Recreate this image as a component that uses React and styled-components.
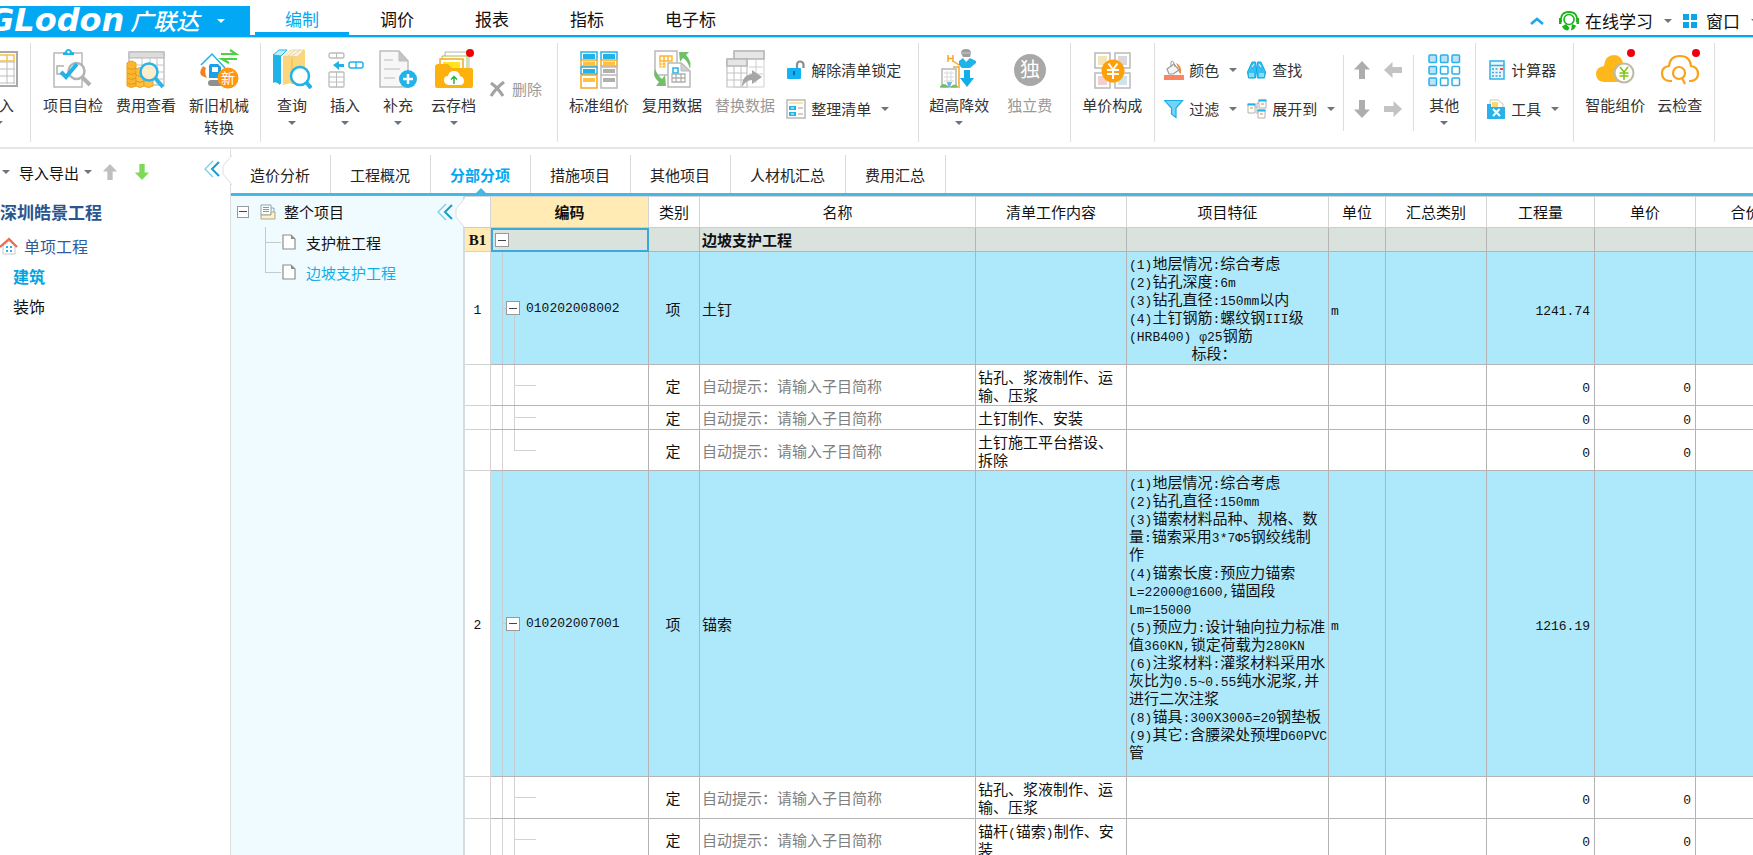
import { Fragment, useState } from "react";
import styled, { createGlobalStyle, css } from "styled-components";

const BLUE = "#02a8f3";

export default function App() {
    const [menu, setMenu] = useState("编制");
    const [tab, setTab] = useState("分部分项");

    return (
        <Page>
            <GlobalStyle />
            <TopBar>
                <Brand type="button">
                    <BrandLatin>GLodon</BrandLatin>
                    <BrandName>广联达</BrandName>
                    <Caret $light />
                </Brand>
                <Menu>
                    {MENUS.map((name) => (
                        <MenuItem key={name} type="button" $active={name === menu} onClick={() => setMenu(name)}>{name}</MenuItem>
                    ))}
                </Menu>
                <TopTools>
                    <ToolButton type="button" aria-label="收起">
                        <svg width="14" height="8" viewBox="0 0 14 8"><path d="M1 7L7 2L13 7" fill="none" stroke="#1aa9ec" strokeWidth="2.6" /></svg>
                    </ToolButton>
                    <ToolButton type="button"><HeadsetIcon />在线学习<Caret /></ToolButton>
                    <ToolButton type="button"><WindowIcon />窗口<Caret /></ToolButton>
                </TopTools>
            </TopBar>
            <Ribbon />
            <Body>
                <Sidebar />
                <Main>
                    <Tabs>
                        {TABS.map((name) => (
                            <Tab key={name} type="button" $active={name === tab} onClick={() => setTab(name)}>{name}</Tab>
                        ))}
                    </Tabs>
                    <Work>
                        <ProjectTree />
                        <BillTable />
                    </Work>
                </Main>
            </Body>
        </Page>
    );
}

const MENUS = ["编制", "调价", "报表", "指标", "电子标"];
const TABS = ["造价分析", "工程概况", "分部分项", "措施项目", "其他项目", "人材机汇总", "费用汇总"];

function Big({ icon, label, second, caret, disabled }) {
    return (
        <BigButton type="button" disabled={disabled}>
            <IconBox>{icon}</IconBox>
            <span>{label}</span>
            {second && <span>{second}</span>}
            {caret && <Caret />}
        </BigButton>
    );
}

function Small({ icon, label, caret, disabled }) {
    return (
        <SmallButton type="button" disabled={disabled}>
            {icon}
            <span>{label}</span>
            {caret && <Caret />}
        </SmallButton>
    );
}

function Ribbon() {
    return (
        <RibbonBar>
            <FirstGroup>
                <Big icon={<ImportIcon />} label="导入" caret />
            </FirstGroup>
            <Group $gap={1} $left={6} $right={5}>
                <Big icon={<CheckIcon />} label="项目自检" />
                <Big icon={<CostIcon />} label="费用查看" />
                <Big icon={<MachineIcon />} label="新旧机械" second="转换" />
            </Group>
            <Group $gap={1} $left={5} $right={11}>
                <Big icon={<QueryIcon />} label="查询" caret />
                <Big icon={<InsertIcon />} label="插入" caret />
                <Big icon={<AppendIcon />} label="补充" caret />
                <Big icon={<ArchiveIcon />} label="云存档" caret />
                <Middle>
                    <Small icon={<DeleteIcon />} label="删除" disabled />
                </Middle>
            </Group>
            <Group $gap={1} $left={5} $right={13}>
                <Big icon={<StandardIcon />} label="标准组价" />
                <Big icon={<ReuseIcon />} label="复用数据" />
                <Big icon={<ReplaceIcon />} label="替换数据" disabled />
                <Stack>
                    <Small icon={<UnlockIcon />} label="解除清单锁定" />
                    <Small icon={<ListIcon />} label="整理清单" caret />
                </Stack>
            </Group>
            <Group $gap={6} $left={4} $right={12}>
                <Big icon={<HeightIcon />} label="超高降效" caret />
                <Big icon={<SoloIcon />} label="独立费" disabled />
            </Group>
            <Group $left={5} $right={6}>
                <Big icon={<PriceIcon />} label="单价构成" />
            </Group>
            <Group $short $gap={2} $left={5} $right={4}>
                <Stack>
                    <Small icon={<PaintIcon />} label="颜色" caret />
                    <Small icon={<FilterIcon />} label="过滤" caret />
                </Stack>
                <Stack>
                    <Small icon={<BinocularsIcon />} label="查找" />
                    <Small icon={<ExpandIcon />} label="展开到" caret />
                </Stack>
            </Group>
            <Group $short $left={2} $right={5}>
                <Stack>
                    <ArrowButton type="button" aria-label="上移"><ArrowIcon turn={0} color="#adadad" /></ArrowButton>
                    <ArrowButton type="button" aria-label="下移"><ArrowIcon turn={180} color="#adadad" /></ArrowButton>
                </Stack>
                <Stack>
                    <ArrowButton type="button" aria-label="左移"><ArrowIcon turn={270} color="#c3c3c3" /></ArrowButton>
                    <ArrowButton type="button" aria-label="右移"><ArrowIcon turn={90} color="#c3c3c3" /></ArrowButton>
                </Stack>
            </Group>
            <Group $left={4} $right={5}>
                <Big icon={<OtherIcon />} label="其他" caret />
            </Group>
            <Group $left={6} $right={10}>
                <Stack>
                    <Small icon={<CalcIcon />} label="计算器" />
                    <Small icon={<ToolIcon />} label="工具" caret />
                </Stack>
            </Group>
            <Group $left={5} $right={6}>
                <Big icon={<SmartIcon />} label="智能组价" />
                <Big icon={<CloudCheckIcon />} label="云检查" />
            </Group>
        </RibbonBar>
    );
}

function Sidebar() {
    return (
        <Side>
            <SideTools>
                <Caret />
                <SideButton type="button">导入导出<Caret /></SideButton>
                <SideArrow type="button" aria-label="上移"><ArrowIcon turn={0} color="#bfbfbf" size={16} /></SideArrow>
                <SideArrow type="button" aria-label="下移"><ArrowIcon turn={180} color="#7ed957" size={16} /></SideArrow>
                <Fold><FoldIcon /></Fold>
            </SideTools>
            <SideTitle>深圳皓景工程</SideTitle>
            <SideLink href="#unit" $color="#2f5c9b"><HouseIcon />单项工程</SideLink>
            <SideLink href="#build" $indent $color="#00a6e0" $bold>建筑</SideLink>
            <SideLink href="#decor" $indent $color="#111">装饰</SideLink>
        </Side>
    );
}

function ProjectTree() {
    return (
        <Tree>
            <TreeHead>
                <Toggle type="button" aria-label="折叠" $small />
                <ProjectIcon />
                <span>整个项目</span>
                <Fold><FoldIcon /></Fold>
            </TreeHead>
            <TreeList>
                <TreeItem><PageIcon /><a href="#pile">支护桩工程</a></TreeItem>
                <TreeItem $active><PageIcon /><a href="#slope">边坡支护工程</a></TreeItem>
            </TreeList>
        </Tree>
    );
}

const COLUMNS = [
    { title: "", width: 26 },
    { title: "编码", width: 158 },
    { title: "类别", width: 51 },
    { title: "名称", width: 276 },
    { title: "清单工作内容", width: 151 },
    { title: "项目特征", width: 202 },
    { title: "单位", width: 57 },
    { title: "汇总类别", width: 101 },
    { title: "工程量", width: 108 },
    { title: "单价", width: 101 },
    { title: "合价", width: 100 },
];

const HINT = "自动提示：请输入子目简称";

const ROWS = [
    {
        kind: "item", no: "1", code: "010202008002", type: "项", name: "土钉", unit: "m", amount: "1241.74", height: 113,
        features: [
            "(1)地层情况:综合考虑",
            "(2)钻孔深度:6m",
            "(3)钻孔直径:150mm以内",
            "(4)土钉钢筋:螺纹钢III级",
            "(HRB400) φ25钢筋",
            "        标段：",
        ],
    },
    { kind: "sub", work: ["钻孔、浆液制作、运", "输、压浆"], height: 41 },
    { kind: "sub", work: ["土钉制作、安装"], height: 24 },
    { kind: "sub", work: ["土钉施工平台搭设、", "拆除"], height: 41, last: true },
    {
        kind: "item", no: "2", code: "010202007001", type: "项", name: "锚索", unit: "m", amount: "1216.19", height: 306,
        features: [
            "(1)地层情况:综合考虑",
            "(2)钻孔直径:150mm",
            "(3)锚索材料品种、规格、数",
            "量:锚索采用3*7Φ5钢绞线制",
            "作",
            "(4)锚索长度:预应力锚索",
            "L=22000@1600,锚固段",
            "Lm=15000",
            "(5)预应力:设计轴向拉力标准",
            "值360KN,锁定荷载为280KN",
            "(6)注浆材料:灌浆材料采用水",
            "灰比为0.5~0.55纯水泥浆,并",
            "进行二次注浆",
            "(8)锚具:300X300δ=20钢垫板",
            "(9)其它:含腰梁处预埋D60PVC",
            "管",
        ],
    },
    { kind: "sub", work: ["钻孔、浆液制作、运", "输、压浆"], height: 42 },
    { kind: "sub", work: ["锚杆(锚索)制作、安", "装"], height: 42 },
];

// half-width runs are set in the mono face, the rest stays in the CJK face
function Mixed({ text }) {
    return text.split(/([\x20-\x7eφΦδ]+)/).map((part, i) => (
        i % 2 ? <Mono key={i}>{part}</Mono> : <Fragment key={i}>{part}</Fragment>
    ));
}

function Lines({ lines }) {
    return (
        <Para>
            {lines.map((line) => <span key={line}><Mixed text={line} /></span>)}
        </Para>
    );
}

function BillTable() {
    return (
        <TableWrap>
            <Table>
                <colgroup>
                    {COLUMNS.map((c) => <Col key={c.title} $width={c.width} />)}
                </colgroup>
                <thead>
                    <tr>
                        {COLUMNS.map((c) => <Th key={c.title} $current={c.title === "编码"}>{c.title}</Th>)}
                    </tr>
                </thead>
                <tbody>
                    <Row $tone="#d9e2dd" $height={24}>
                        <NoCell $current>B1</NoCell>
                        <RootCell><Toggle type="button" aria-label="折叠" /></RootCell>
                        <Td />
                        <Td $bold>边坡支护工程</Td>
                        <Td /><Td /><Td /><Td /><Td /><Td /><Td />
                    </Row>
                    {ROWS.map((row, i) => row.kind === "item" ? (
                        <Row key={i} $tone="#aee9fb" $height={row.height}>
                            <NoCell><Mono>{row.no}</Mono></NoCell>
                            <ItemCell>
                                <CodeBox><Toggle type="button" aria-label="折叠" /><Mono>{row.code}</Mono></CodeBox>
                            </ItemCell>
                            <Td $align="center">{row.type}</Td>
                            <Td>{row.name}</Td>
                            <Td />
                            <FeatureCell><Lines lines={row.features} /></FeatureCell>
                            <Td><Mono>{row.unit}</Mono></Td>
                            <Td />
                            <Td $align="right"><Mono>{row.amount}</Mono></Td>
                            <Td /><Td />
                        </Row>
                    ) : (
                        <Row key={i} $tone="#fff" $height={row.height}>
                            <NoCell />
                            <SubCell $last={row.last} />
                            <Td $align="center">定</Td>
                            <Td $muted>{HINT}</Td>
                            <Td><Lines lines={row.work} /></Td>
                            <Td /><Td /><Td />
                            <Td $align="right"><Mono>0</Mono></Td>
                            <Td $align="right"><Mono>0</Mono></Td>
                            <Td />
                        </Row>
                    ))}
                </tbody>
            </Table>
        </TableWrap>
    );
}

/* ---------- icons ---------- */

function Icon40({ children }) {
    return <svg width="40" height="40" viewBox="0 0 40 40" fill="none">{children}</svg>;
}

function Icon20({ children }) {
    return <svg width="20" height="20" viewBox="0 0 20 20" fill="none">{children}</svg>;
}

function ImportIcon() {
    return (
        <Icon40>
            <rect x="2" y="3" width="36" height="34" fill="#fff" stroke="#a9a9a9" strokeWidth="2" />
            <path d="M5 13H36M5 20H36M5 27H36M5 34H36M12 13V35M20 13V35M28 13V35M35 13V35" stroke="#bdbdbd" />
            <path d="M5 6H35V12H5ZM12 6V12M20 6V12M28 6V12" stroke="#f9c04d" strokeWidth="1.5" />
        </Icon40>
    );
}

function CheckIcon() {
    return (
        <Icon40>
            <path d="M1 4H29V38H1Z" stroke="#b9b9b9" strokeWidth="1.5" fill="#fff" />
            <path d="M10 6V4Q10 3 12 3Q13 0 15.500 0Q18 0 19 3Q21 3 21 4V6Z" fill="#1fb3ea" />
            <circle cx="15.500" cy="3" r="1.300" fill="#fff" />
            <path d="M11 17H4V25H11" stroke="#b0b0b0" strokeWidth="1.500" />
            <circle cx="23.500" cy="22" r="8" fill="#fff" stroke="#b3b3b3" strokeWidth="2.500" />
            <path d="M29 28L37 36" stroke="#b3b3b3" strokeWidth="4" />
            <path d="M8 23L13 28L24 15" stroke="#1fb3ea" strokeWidth="4" />
        </Icon40>
    );
}

function CostIcon() {
    return (
        <Icon40>
            <path d="M3 3H38V36H3Z" fill="#fff" stroke="#c4c4c4" strokeWidth="1.5" />
            <path d="M3 3H38V9H3Z" fill="#dcdcdc" stroke="#b4b4b4" />
            <path d="M4 16H38M4 23H38M4 30H38M16 9V36M24 9V36M31 9V36" stroke="#c4c4c4" />
            <path d="M1 14Q5 10 10 14V37Q5 40 1 37Z" fill="#f9b62e" stroke="#eea21a" />
            <path d="M10 20Q14 17 18 20V37Q14 40 10 37Z" fill="#fbc146" stroke="#eea21a" />
            <path d="M18 30Q22 28 27 31V37Q22 40 18 37Z" fill="#fbc146" stroke="#eea21a" />
            <path d="M1 19Q5 22 10 19M1 24Q5 27 10 24M1 29Q5 32 10 29M1 34Q5 37 10 34M10 26Q14 29 18 26M10 32Q14 35 18 32" stroke="#e8961a" />
            <circle cx="23" cy="23" r="8.500" fill="#fdeecb" stroke="#2bb4e9" strokeWidth="2.500" />
            <path d="M29 29L37 38" stroke="#2bb4e9" strokeWidth="4" />
        </Icon40>
    );
}

function MachineIcon() {
    return (
        <Icon40>
            <path d="M2 16L13 5L26 19" stroke="#1fb3ea" strokeWidth="1.500" />
            <path d="M4 17Q-1 24 3 27L8 29Q5 23 7 19Z" fill="#f58220" />
            <path d="M11 15H19L22 18V29H10V17Z" fill="#1c9fe4" />
            <rect x="13" y="18" width="6" height="5" fill="#fff" />
            <rect x="9" y="31" width="17" height="6" rx="3" fill="#8f8f8f" />
            <path d="M22 5H37L31 1M38 10H23L30 14" stroke="#4fd043" strokeWidth="2.200" />
            <circle cx="29" cy="29" r="10.500" fill="#ff980f" />
            <text x="29" y="34" textAnchor="middle" fontSize="14" fill="#fff" fontFamily="'Noto Sans CJK SC', sans-serif">新</text>
        </Icon40>
    );
}

function QueryIcon() {
    return (
        <Icon40>
            <path d="M1 6L8 3V36Q4 32 1 34Z" fill="#1fb3ea" />
            <path d="M1 6L7 1H15L9 7Z" fill="#c6ecf9" stroke="#1fb3ea" />
            <path d="M8 7V35" stroke="#1fb3ea" strokeWidth="2" />
            <path d="M11 8L19 1H33V32L26 37L19 34L11 36Z" fill="#fbd67a" />
            <path d="M11 8L19 1H32L25 8L18 7Z" fill="#fdf3da" stroke="#e9c46b" strokeWidth=".6" />
            <path d="M16 7L23 1M20 7L28 1" stroke="#d9d2c0" />
            <path d="M20 9V35" stroke="#e9bb55" />
            <circle cx="28" cy="27" r="9" fill="#fff" stroke="#1fb3ea" strokeWidth="2.500" />
            <path d="M34 33L39 39" stroke="#1fb3ea" strokeWidth="4" />
        </Icon40>
    );
}

function InsertIcon() {
    return (
        <Icon40>
            <rect x="4" y="4" width="15" height="5" rx="2" stroke="#bcbcbc" strokeWidth="1.300" />
            <path d="M11.500 4V9" stroke="#bcbcbc" />
            <rect x="4" y="23" width="15" height="15" rx="1" stroke="#bcbcbc" strokeWidth="1.300" />
            <path d="M4 28H19M4 33H19M11.500 23V38" stroke="#bcbcbc" />
            <path d="M8 16L14 12V15H19V18H14V21Z" fill="#1fb3ea" />
            <rect x="24" y="13" width="14" height="6" rx="2" stroke="#1fb3ea" strokeWidth="1.500" />
            <path d="M31 13V19" stroke="#1fb3ea" strokeWidth="1.300" />
        </Icon40>
    );
}

function AppendIcon() {
    return (
        <Icon40>
            <path d="M2 2H21L30 12V38H2Z" fill="#f7f7f7" stroke="#bdbdbd" strokeWidth="1.500" />
            <path d="M21 2V12H30Z" fill="#c4c4c4" stroke="#bdbdbd" />
            <path d="M6 11H15M6 20H22M6 29H17" stroke="#cfcfcf" strokeWidth="1.500" />
            <circle cx="30" cy="30" r="9" fill="#1fb3ea" />
            <path d="M30 25V35M25 30H35" stroke="#fff" strokeWidth="2.500" />
        </Icon40>
    );
}

function ArchiveIcon() {
    return (
        <Icon40>
            <path d="M11 3H35V20H11Z" fill="#fff" stroke="#b5b5b5" />
            <path d="M8 7H33V22H8Z" fill="#fff" stroke="#a5c23c" />
            <path d="M6 10H29V22H6Z" fill="#fff" stroke="#f6a623" strokeWidth="1.500" />
            <path d="M9 13H26V20H9Z" fill="#ffe51e" />
            <path d="M1 18Q1 15 4 15H14L18 19H37Q39 19 39 21V37Q39 39 37 39H3Q1 39 1 37Z" fill="#fdb10d" />
            <path d="M14 36Q10 35 10 31Q10 27 14 27Q15 22 20 22Q25 22 26 27Q30 28 30 32Q30 36 26 36Z" fill="#fff" />
            <path d="M20 35V28M17 30.500L20 27.500L23 30.500" stroke="#25b53c" strokeWidth="1.500" />
            <circle cx="36" cy="4" r="4" fill="#ee0000" />
        </Icon40>
    );
}

function DeleteIcon() {
    return <Icon20><path d="M4 4Q11 9 16 17M17 3Q9 9 4 17" stroke="#a3a3a3" strokeWidth="3.200" /></Icon20>;
}

function StandardIcon() {
    return (
        <Icon40>
            <path d="M2 11V3H18V11M22 11V3H38V11" stroke="#1fb3ea" strokeWidth="1.500" />
            <path d="M4 5H16V10H4ZM24 5H36V10H24Z" fill="#1fb3ea" />
            <path d="M2 11H18V17H2ZM22 11H38V17H22Z" stroke="#f6a623" strokeWidth="1.500" />
            <path d="M4 12.500H16V16H4ZM24 12.500H36V16H24Z" fill="#ffc23e" />
            <path d="M2 18H18V25H2Z" stroke="#1fb3ea" strokeWidth="1.500" />
            <path d="M4 20H16V24H4Z" fill="#1fb3ea" />
            <path d="M2 26H18V39H2Z" stroke="#f6a623" strokeWidth="1.500" />
            <path d="M4 29H16V33H4Z" fill="#ffc23e" />
            <path d="M22 18H38V39H22ZM22 26H38" stroke="#b9b9b9" strokeWidth="1.500" />
            <path d="M24 20H36V24H24ZM24 29H36V33H24Z" fill="#b0b0b0" />
        </Icon40>
    );
}

function ReuseIcon() {
    return (
        <Icon40>
            <rect x="3" y="2" width="22" height="24" fill="#fff" stroke="#b9b9b9" strokeWidth="1.500" />
            <path d="M8 7H20V12H8ZM12 7V12M16 7V12" stroke="#ffb52b" strokeWidth="1.500" />
            <path d="M8 12V18H14M8 15H14M12 12V18" stroke="#ffb52b" strokeWidth="1.200" />
            <path d="M16 14H29L38 22V38H16Z" fill="#fff" stroke="#b9b9b9" strokeWidth="1.500" />
            <path d="M29 14L38 22H29Z" fill="#d0d0d0" stroke="#b9b9b9" />
            <path d="M21 19H26V24H21Z" stroke="#1fb3ea" strokeWidth="1.500" />
            <path d="M20 25H33V33H20ZM20 29H33M24 25V33M29 25V33" stroke="#b0b0b0" strokeWidth="1.300" />
            <path d="M27 3H37L34 6Q40 12 38 20Q36 12 31 9L28 13Z" fill="#73bf69" />
            <path d="M14 37H4L7 33Q0 28 3 20Q6 27 10 30L13 26Z" fill="#73bf69" />
        </Icon40>
    );
}

function ReplaceIcon() {
    return (
        <Icon40>
            <path d="M9 2H39V38H9Z" fill="#fff" stroke="#cfcfcf" />
            <path d="M9 2H39V10H9Z" fill="#e6e6e6" stroke="#b5b5b5" strokeWidth="1.500" />
            <path d="M24 18H38M24 25H38M31 10V34" stroke="#cdcdcd" />
            <path d="M2 10H22V38H2Z" fill="#fff" stroke="#c2c2c2" strokeWidth="1.200" />
            <path d="M2 10H22V17H2Z" fill="#e6e6e6" stroke="#b5b5b5" strokeWidth="1.500" />
            <path d="M2 24H22M2 31H22M9 17V38M16 17V38" stroke="#c2c2c2" />
            <path d="M17 38Q17 26 27 25V21L37 28L27 35V31Q21 31 17 38Z" fill="#a6a6a6" />
        </Icon40>
    );
}

function UnlockIcon() {
    return (
        <Icon20>
            <path d="M11 9V5Q11 1.500 14 1.500Q17.500 1.500 17.500 5V8" stroke="#8d8d8d" strokeWidth="2.200" />
            <rect x="1" y="8" width="14" height="11" rx="1" fill="#12b3f5" />
            <path d="M8 11V15" stroke="#0a6c9c" strokeWidth="2" />
        </Icon20>
    );
}

function ListIcon() {
    return (
        <Icon20>
            <rect x="1" y="1" width="18" height="18" fill="#fff" stroke="#b9b9b9" strokeWidth="1.500" />
            <path d="M3 3H17V5H3Z" fill="#f7e6a8" />
            <path d="M3 7H10V11H3ZM3 13H10V17H3Z" fill="#1fb3ea" />
            <path d="M12 9H17M12 15H17" stroke="#cfcfcf" strokeWidth="2" />
            <path d="M5 9H8M5 15H8" stroke="#fff" />
        </Icon20>
    );
}

function HeightIcon() {
    return (
        <Icon40>
            <path d="M9 6V13M14 6V13M9 9.500H14" stroke="#f6a623" strokeWidth="1.500" />
            <path d="M14 12L20 16M14 18H20V39" stroke="#f6a623" strokeWidth="1.500" />
            <path d="M22 4Q22 0 27 0Q32 0 32 4L31 8H24Z" fill="#9e9e9e" />
            <path d="M22 4H32" stroke="#c9c9c9" />
            <path d="M20 12L24 9L27 13L31 9L37 12V14L31 19H23L20 16Z" fill="#1fb3ea" />
            <path d="M25 21H31V29H35L28 38L21 29H25Z" fill="#12aeea" />
            <path d="M3 20H17V38H3Z" fill="#fff" stroke="#b5b5b5" strokeWidth="1.500" />
            <path d="M5 24H15M5 28H15M5 32H15M8 22V34M12 22V34" stroke="#d9d9d9" />
            <path d="M8 33H13L11 38H9Z" fill="#6fb7d8" />
            <path d="M1 38Q3 34 7 36L9 38ZM12 38Q15 34 19 38Z" fill="#73bf69" stroke="#73bf69" />
        </Icon40>
    );
}

function SoloIcon() {
    return (
        <Icon40>
            <circle cx="20" cy="21" r="16" fill="#a8a8a8" />
            <text x="20" y="28" textAnchor="middle" fontSize="20" fill="#fff" fontFamily="'Noto Sans CJK SC', sans-serif">独</text>
        </Icon40>
    );
}

function PriceIcon() {
    return (
        <Icon40>
            <path d="M3 4H18V19H3ZM23 4H38V19H23ZM3 24H18V39H3ZM23 24H38V39H23Z" stroke="#b9b9b9" strokeWidth="1.500" />
            <path d="M6 7H15V16H6Z" fill="#f3e5b5" />
            <path d="M26 7H35V16H26Z" fill="#d9d9dd" />
            <path d="M6 27H15V36H6Z" fill="#f0cfd2" />
            <path d="M26 27H35V36H26Z" fill="#cfe3ee" />
            <circle cx="21" cy="22" r="11.500" fill="#fda10b" />
            <path d="M16.500 14.500L21 20.500L25.500 14.500M15 21H27M15 25H27M21 20V30" stroke="#fff" strokeWidth="2" />
        </Icon40>
    );
}

function PaintIcon() {
    return (
        <Icon20>
            <path d="M3 9L10 4L15 10L9 14H5Z" fill="#f5f5f5" stroke="#9b9b9b" strokeWidth="1.200" />
            <path d="M7 7V2Q8 0 9.500 2L11 7" stroke="#9b9b9b" />
            <path d="M12 3Q18 5 17 14Q14 13 15 9Z" fill="#f28a3a" />
            <path d="M0 15H20V20H0Z" fill="#fa8563" />
        </Icon20>
    );
}

function FilterIcon() {
    return <Icon20><path d="M.5 1.500H18.500L12 9V18.500L7.500 15V9Z" fill="#74d4f7" stroke="#18aee8" strokeWidth="1.200" /></Icon20>;
}

function BinocularsIcon() {
    return (
        <Icon20>
            <path d="M5 2H8.500L9.500 10L8.500 18H1.500L.5 12ZM14 2H10.500L9.500 10L10.500 18H17.500L18.500 12Z" fill="#35c0f3" stroke="#10a7e4" />
            <path d="M2 13H7V17H2ZM12 13H17V17H12Z" fill="#8cdcf8" />
            <path d="M5 7L7 4M12 4L14 7" stroke="#fff" />
        </Icon20>
    );
}

function ExpandIcon() {
    return (
        <Icon20>
            <path d="M8 8H10V4H12M10 8V15" stroke="#b0b0b0" />
            <path d="M1 5H8V14H1ZM12 1H19V9H12ZM11 11H18V19H11Z" fill="#fff" stroke="#b0b0b0" />
            <path d="M.5 5.500H8.500M11.500 1.500H19.500M10.500 11.500H18.500" stroke="#1fb3ea" strokeWidth="2" />
            <path d="M3 9H6M14 5H17M13 15H16" stroke="#e5c998" strokeWidth="2" />
        </Icon20>
    );
}

function ArrowIcon({ turn, color, size = 18 }) {
    return (
        <svg width={size} height={size} viewBox="0 0 18 18">
            <path d="M9 0L17 8.500H12V18H6V8.500H1Z" fill={color} transform={`rotate(${turn} 9 9)`} />
        </svg>
    );
}

function OtherIcon() {
    const cells = [0, 1, 2, 3, 4, 5, 6, 7, 8];
    return (
        <Icon40>
            {cells.map((n) => (
                <rect key={n} x={5 + (n % 3) * 11.500} y={6 + Math.floor(n / 3) * 11.500} width="7.500" height="7.500" rx="1"
                    fill={n < 4 || n === 6 ? "#bfe2f5" : "#fff"} stroke="#2bb0ea" strokeWidth="1.500" />
            ))}
        </Icon40>
    );
}

function CalcIcon() {
    return (
        <Icon20>
            <rect x="4" y="1" width="14" height="18" fill="#e8f7fd" stroke="#2db4e8" strokeWidth="1.500" />
            <path d="M4 5.500H18" stroke="#2db4e8" strokeWidth="1.500" />
            <path d="M6 9H13M6 12.500H16M6 16H16" stroke="#4a9fd4" strokeWidth="1.500" strokeDasharray="2 1.500" />
            <path d="M14 8H17V10H14Z" fill="#f04a3c" />
        </Icon20>
    );
}

function ToolIcon() {
    return (
        <Icon20>
            <path d="M4 1H12L17 5V10H4Z" fill="#fff" stroke="#d0c8a8" />
            <path d="M6 3H12V8H6Z" fill="#fbd873" />
            <path d="M1 5H5V8H19V20H1Z" fill="#2bb0ea" />
            <path d="M7 10L14 17M13.500 10L7 17" stroke="#fff" strokeWidth="2" />
        </Icon20>
    );
}

function SmartIcon() {
    return (
        <Icon40>
            <path d="M9 33Q1 32 1 25Q1 18 9 17Q10 6 19 6Q26 6 28 14Q34 18 33 33Z" fill="#ffb81c" />
            <circle cx="29" cy="24" r="9.500" fill="#fffdf5" stroke="#bdb9a6" strokeWidth="2" />
            <path d="M25 18L29 23L33 18M24.500 24H33.500M24.500 27H33.500M29 23V31" stroke="#7ec61d" strokeWidth="1.600" />
            <circle cx="36" cy="4" r="4" fill="#f00010" />
        </Icon40>
    );
}

function CloudCheckIcon() {
    return (
        <Icon40>
            <path d="M12 32H9Q2 31 2 24Q2 18 9 17Q10 7 20 7Q30 7 31 17Q38 18 38 25Q38 31 31 32H29" stroke="#fba11b" strokeWidth="2.200" />
            <circle cx="19" cy="24" r="6" stroke="#fba11b" strokeWidth="2.200" />
            <path d="M22 29L25 35" stroke="#fba11b" strokeWidth="2.200" />
            <circle cx="36" cy="4" r="4" fill="#f00010" />
        </Icon40>
    );
}

function HeadsetIcon() {
    return (
        <Icon20>
            <path d="M2 11Q1 1 10 1Q19 1 18 11" stroke="#19b519" strokeWidth="1.800" />
            <circle cx="10" cy="8.500" r="5" stroke="#19b519" strokeWidth="1.600" />
            <path d="M0 7H2.500V13H0ZM17.500 7H20V13H17.500Z" fill="#19b519" />
            <path d="M7 13L3 15.500Q5 19.500 9 19.500L10.500 17ZM13 13L17 14.500Q16 18.500 12 19.500Z" fill="#19b519" />
        </Icon20>
    );
}

function WindowIcon() {
    return <svg width="17" height="14" viewBox="0 0 17 14"><path d="M0 0H6V6H0ZM8 0H14V6H8ZM0 8H6V14H0ZM8 8H14V14H8Z" fill="#0ba5ea" /></svg>;
}

function FoldIcon() {
    return (
        <svg width="28" height="32" viewBox="0 0 28 32" fill="none">
            <path d="M28 0V1L19 12V20L28 31V32Z" fill="#fff" />
            <path d="M28 1L19 12V20L28 31" stroke="#dcdfe0" />
            <path d="M9 7L1 15L9 23" stroke="#7ccbe8" strokeWidth="1.300" />
            <path d="M15 8L8 15L15 22" stroke="#1a9dcc" strokeWidth="2" />
        </svg>
    );
}

function HouseIcon() {
    return (
        <svg width="18" height="18" viewBox="0 0 18 18" fill="none">
            <path d="M3 9V17H15V9L9 4Z" fill="#fff" stroke="#c9c9c9" />
            <path d="M0 10L9 2L17 10" stroke="#f0684a" strokeWidth="2.200" />
            <path d="M6 9H8V11H6ZM10 9H12V11H10ZM6 13H8V15H6ZM10 13H12V15H10Z" fill="#23b2ee" />
        </svg>
    );
}

function ProjectIcon() {
    return (
        <svg width="16" height="16" viewBox="0 0 16 16" fill="none">
            <path d="M1 1H11V11H1Z" fill="#fff" stroke="#8ba3b0" />
            <path d="M3 3.500H9M3 5.500H9M3 7.500H9" stroke="#41aee0" />
            <path d="M11 4H14V14" stroke="#8ba3b0" />
            <path d="M1 11H11V8H15V15H1Z" fill="#fbf3c9" stroke="#a9a58c" />
        </svg>
    );
}

function PageIcon() {
    return (
        <svg width="14" height="16" viewBox="0 0 14 16" fill="none">
            <path d="M1 1H9L13 5V15H1Z" fill="#fff" stroke="#8e8e8e" strokeWidth="1.200" />
            <path d="M9 1V5H13Z" fill="#8e8e8e" />
        </svg>
    );
}

/* ---------- styles ---------- */

const GlobalStyle = createGlobalStyle`
    * {
        box-sizing: border-box;
    }
    body {
        margin: 0;
        background: #fff;
        color: #111;
        font-family: "Noto Sans CJK SC", sans-serif;
        font-size: 15px;
    }
    button {
        margin: 0;
        padding: 0;
        border: 0;
        background: none;
        color: inherit;
        font: inherit;
        white-space: nowrap;
    }
    svg {
        display: block;
        flex: none;
    }
`
const Page = styled.div`
    display: flex;
    flex-direction: column;
    height: 100vh;
    overflow: hidden;
`
const Caret = styled.i`
    flex: none;
    border: 4px solid transparent;
    border-top: 4px solid ${({ $light }) => ($light ? "#fff" : "#70737f")};
    border-bottom: 0;
`
const TopBar = styled.header`
    display: flex;
    flex: none;
    height: 37px;
    border-bottom: 2px solid ${BLUE};
    box-shadow: 0 1px 0 #a9dff8;
`
const Brand = styled.button`
    display: flex;
    align-items: center;
    height: 29px;
    width: 250px;
    flex: none;
    margin-top: 6px;
    overflow: hidden;
    background: ${BLUE};
    color: #fff;
`
const BrandLatin = styled.span`
    margin-left: -12px;
    font-family: "DejaVu Sans", sans-serif;
    font-size: 32px;
    font-weight: 700;
    font-style: italic;
    line-height: 29px;
`
const BrandName = styled.span`
    margin: 0 18px 0 6px;
    font-size: 23px;
    font-weight: 500;
    font-style: italic;
    line-height: 29px;
`
const Menu = styled.nav`
    display: flex;
    gap: 1px;
    margin-left: 5px;
`
const MenuItem = styled.button`
    padding: 4px 30px 0;
    border-bottom: 3px solid ${({ $active }) => ($active ? BLUE : "transparent")};
    color: ${({ $active }) => ($active ? BLUE : "#111")};
    font-size: 17px;
`
const TopTools = styled.div`
    display: flex;
    gap: 11px;
    margin-left: auto;
    margin-right: -6px;
    padding-top: 6px;
`
const ToolButton = styled.button`
    display: flex;
    align-items: center;
    gap: 6px;
    font-size: 17px;

    ${Caret} {
        margin-left: 5px;
    }
    &:first-child {
        margin-right: 4px;
    }
`
const RibbonBar = styled.div`
    display: flex;
    flex: none;
    height: 112px;
    padding-top: 6px;
    border-bottom: 2px solid #e6e6e6;
    color: #333;
    overflow: hidden;
`
const Group = styled.section`
    position: relative;
    display: flex;
    flex: none;
    height: 99px;
    gap: ${({ $gap = 0 }) => $gap}px;
    padding: 0 ${({ $right }) => $right + 1}px 0 ${({ $left }) => $left}px;

    &::after {
        content: "";
        position: absolute;
        right: 0;
        top: ${({ $short }) => ($short ? 12 : 0)}px;
        bottom: ${({ $short }) => ($short ? 11 : 0)}px;
        width: 1px;
        background: #dedede;
    }
`
const FirstGroup = styled(Group).attrs({ $left: 0, $right: 5 })`
    margin-left: -27px;
`
const BigButton = styled.button`
    display: flex;
    flex-direction: column;
    align-items: center;
    padding: 6px 6px 0;
    line-height: 22px;
    color: ${({ disabled }) => (disabled ? "#999" : "#333")};

    ${Caret} {
        margin-top: 5px;
    }
`
const IconBox = styled.span`
    width: 40px;
    height: 40px;
    margin-bottom: 5px;
`
const Stack = styled.div`
    display: flex;
    flex-direction: column;
    padding-top: 7px;
`
const Middle = styled.div`
    display: flex;
    padding-top: 26px;
`
const SmallButton = styled.button`
    display: flex;
    align-items: center;
    gap: 5px;
    height: 39px;
    padding: 0 4px;
    color: ${({ disabled }) => (disabled ? "#999" : "#333")};

    ${Caret} {
        margin-left: 5px;
    }
`
const ArrowButton = styled.button`
    display: flex;
    align-items: center;
    justify-content: center;
    width: 31px;
    height: 39px;
`
const Body = styled.div`
    display: flex;
    flex: 1;
    min-height: 0;
`
const Side = styled.aside`
    width: 231px;
    flex: none;
    border-right: 1px solid #dcdfe0;
`
const SideTools = styled.div`
    position: relative;
    display: flex;
    align-items: center;
    height: 46px;
    margin-bottom: 2px;
    padding-left: 2px;
`
const SideButton = styled.button`
    display: flex;
    align-items: center;
    gap: 5px;
    margin: 0 10px 0 9px;
`
const SideArrow = styled.button`
    margin-right: 16px;
`
/* sits on the border of the panel it folds */
const Fold = styled.span`
    position: absolute;
    right: -2px;
    top: 5px;
`
const SideTitle = styled.h1`
    margin: 0 0 4px;
    color: #2a5590;
    font-size: 17px;
    font-weight: 700;
    line-height: 30px;
`
const SideLink = styled.a`
    display: flex;
    align-items: center;
    gap: 6px;
    height: 30px;
    padding-left: ${({ $indent }) => ($indent ? 13 : 0)}px;
    color: ${({ $color }) => $color};
    font-size: 16px;
    font-weight: ${({ $bold }) => ($bold ? 700 : 400)};
    text-decoration: none;
`
const Main = styled.main`
    display: flex;
    flex: 1;
    flex-direction: column;
    min-width: 0;
`
const Tabs = styled.div`
    display: flex;
    flex: none;
    height: 47px;
    padding-top: 6px;
    border-bottom: 3px solid #46b8e6;
`
const Tab = styled.button`
    position: relative;
    padding: 0 20px 0 19px;
    border-right: 1px solid #d9d9d9;
    color: #222;

    ${({ $active }) => $active && css`
        color: ${BLUE};
        font-weight: 700;

        &::after {
            content: "";
            position: absolute;
            left: 50%;
            bottom: 0;
            margin-left: -5px;
            border: 5px solid transparent;
            border-top: 0;
            border-bottom-color: #46b8e6;
        }
    `}
`
const Work = styled.div`
    display: flex;
    flex: 1;
    min-height: 0;
`
const Tree = styled.div`
    width: 234px;
    flex: none;
    border-right: 2px solid #d5dcdf;
    background: #effbfe;
`
const TreeHead = styled.div`
    position: relative;
    display: flex;
    align-items: center;
    height: 31px;
    padding-left: 6px;

    span {
        margin-left: 8px;
    }
    button {
        margin-right: 11px;
    }
    ${Fold} {
        top: 1px;
        margin: 0;
    }
`
const TreeList = styled.ul`
    margin: 0;
    padding: 0 0 0 34px;
    list-style: none;
`
const TreeItem = styled.li`
    display: flex;
    align-items: center;
    gap: 10px;
    height: 30px;
    padding-left: 17px;
    background:
        linear-gradient(#c4c9cb, #c4c9cb) 0 0 / 1px 100% no-repeat,
        linear-gradient(#c4c9cb, #c4c9cb) 0 50% / 16px 1px no-repeat;

    &:last-child {
        background-size: 1px 50%, 16px 1px;
    }
    a {
        color: ${({ $active }) => ($active ? "#12b0e6" : "#111")};
        text-decoration: none;
    }
`
const Toggle = styled.button`
    flex: none;
    display: block;
    width: ${({ $small }) => ($small ? 12 : 14)}px;
    height: ${({ $small }) => ($small ? 12 : 14)}px;
    border: 1px solid #999;
    background: linear-gradient(#444, #444) center / 8px 1px no-repeat #fff;
`
const TableWrap = styled.div`
    flex: 1;
    min-width: 0;
    overflow: hidden;
    border-top: 1px solid #d3d6d8;
`
const Table = styled.table`
    width: max-content;
    table-layout: fixed;
    border-collapse: separate;
    border-spacing: 0;
`
const Col = styled.col`
    width: ${({ $width }) => $width}px;
`
const Th = styled.th`
    height: 31px;
    padding: 0 0 2px;
    border-right: 1px solid #d3d3d3;
    border-bottom: 1px solid #c9cdcd;
    background: ${({ $current }) => ($current ? "#ffebb3" : "#fff")};
    font-weight: ${({ $current }) => ($current ? 700 : 400)};
`
const Td = styled.td`
    padding: 1px 4px 0 2px;
    border-right: 1px solid #b4b4b4;
    border-bottom: 1px solid #b4b4b4;
    color: ${({ $muted }) => ($muted ? "#808080" : "#111")};
    font-weight: ${({ $bold }) => ($bold ? 700 : 400)};
    line-height: 18px;
    text-align: ${({ $align = "left" }) => $align};
    white-space: nowrap;
`
const Row = styled.tr`
    height: ${({ $height }) => $height}px;
    background: ${({ $tone }) => $tone};
`
const NoCell = styled(Td)`
    padding: 1px 0 0;
    border-color: #d3d3d3;
    background: ${({ $current }) => ($current ? "#ffebb3" : "#fff")};
    font-family: "Liberation Serif", serif;
    font-weight: 700;
    text-align: center;
`
const RootCell = styled(Td)`
    padding: 0 0 0 2px;
    border: 2px solid #3ba9d8;
`
const ItemCell = styled(Td)`
    padding: 0 0 0 15px;
    background:
        linear-gradient(#c6cdd0, #c6cdd0) 11px 0 / 1px 100% no-repeat,
        linear-gradient(#c6cdd0, #c6cdd0) 11px 50% / 6px 1px no-repeat,
        linear-gradient(#c6cdd0, #c6cdd0) 23px 100% / 1px 50% no-repeat;
`
const SubCell = styled(Td)`
    background:
        linear-gradient(#d3d3d3, #d3d3d3) 11px 0 / 1px 100% no-repeat,
        linear-gradient(#d3d3d3, #d3d3d3) 23px 50% / 22px 1px no-repeat,
        linear-gradient(#d3d3d3, #d3d3d3) 23px 0 / 1px ${({ $last }) => ($last ? 50 : 100)}% no-repeat;
`
const CodeBox = styled.div`
    display: flex;
    align-items: center;
    gap: 6px;
`
const Mono = styled.span`
    font-family: "Liberation Mono", monospace;
    font-size: 13px;
    font-weight: 400;
    line-height: 11px;
    white-space: pre;
`
const FeatureCell = styled(Td)`
    padding: 2px 0 0 2px;
    vertical-align: top;
`
const Para = styled.div`
    display: flex;
    flex-direction: column;
`
